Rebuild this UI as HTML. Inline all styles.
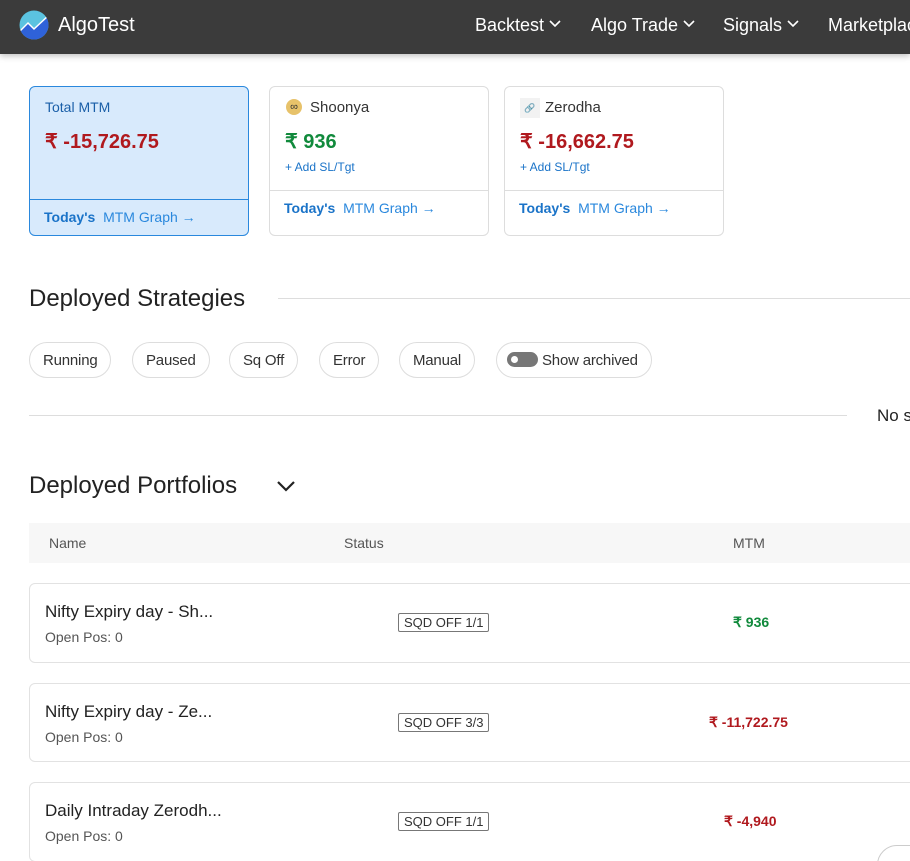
<!DOCTYPE html>
<html><head><meta charset="utf-8"><style>
*{box-sizing:border-box;margin:0;padding:0}
html,body{width:910px;height:861px;overflow:hidden}
body{background:#fff;font-family:"Liberation Sans",Arial,sans-serif;position:relative;color:#222}
.a{position:absolute;white-space:nowrap}
.hdr{left:0;top:0;width:910px;height:54px;background:#3b3b3b;box-shadow:0 2px 6px rgba(0,0,0,.25)}
.nav{color:#fff;font-size:18px;top:15px}
.nav svg{margin-left:4px;vertical-align:middle;position:relative;top:-2px}
.card{border:1px solid #ddd;border-radius:6px;background:#fff;width:220px;height:150px;top:86px}
.card .dv{position:absolute;left:0;right:0;top:103px;border-top:1px solid #ddd}
.card .nm{position:absolute;left:40px;top:12px;font-size:15px;color:#333}
.card .val{position:absolute;left:15px;top:42px;font-size:20px;font-weight:bold}
.card .sl{position:absolute;left:15px;top:73px;font-size:12px;color:#1a73c8}
.card .lk{position:absolute;left:14px;top:113px;font-size:14px;color:#2a88dd}
.card .lk b{color:#1a73c8}
.g{color:#118a3c}.r{color:#b0191e}
.pill{top:342px;height:36px;border:1px solid #ddd;border-radius:18px;font-size:15px;color:#333;line-height:36px;padding:0 13px;letter-spacing:-.2px}
.row{left:29px;width:900px;height:80px;border:1px solid #e2e2e2;border-radius:6px}
.row .t{position:absolute;left:15px;top:18px;font-size:17px;color:#222}
.row .o{position:absolute;left:15px;top:45px;font-size:14px;color:#555}
.row .s{position:absolute;left:368px;top:29px;border:1px solid #777;border-radius:2px;font-size:13px;color:#333;padding:1px 5px}
.row .m{position:absolute;top:30px;font-size:14px;font-weight:bold}
</style></head><body>
<div class="a hdr"></div>
<svg class="a" style="left:19px;top:10px" width="30" height="30" viewBox="0 0 30 30"><defs><clipPath id="c"><circle cx="15" cy="15" r="14.5"/></clipPath></defs><g clip-path="url(#c)"><rect width="30" height="30" fill="#5bc3e0"/><path d="M0 22 L9 13 L15 19 L30 5 L30 30 L0 30Z" fill="#2f62d9"/><path d="M0 22 L9 13 L15 19 L30 5" stroke="#fff" stroke-width="1.5" fill="none"/></g></svg>
<div class="a" style="left:58px;top:14px;font-size:20px;color:#fff">AlgoTest</div>
<div class="a nav" style="left:475px">Backtest<svg width="14" height="10" viewBox="0 0 14 10"><path d="M2 2 L7 7 L12 2" stroke="#fff" stroke-width="1.6" fill="none"/></svg></div>
<div class="a nav" style="left:591px">Algo Trade<svg width="14" height="10" viewBox="0 0 14 10"><path d="M2 2 L7 7 L12 2" stroke="#fff" stroke-width="1.6" fill="none"/></svg></div>
<div class="a nav" style="left:723px">Signals<svg width="14" height="10" viewBox="0 0 14 10"><path d="M2 2 L7 7 L12 2" stroke="#fff" stroke-width="1.6" fill="none"/></svg></div>
<div class="a nav" style="left:828px">Marketplace</div>

<div class="a card" style="left:29px;background:#d8eafc;border-color:#2a88dd"><div class="dv" style="top:112px;border-color:#2a88dd"></div>
<div class="nm" style="left:15px;color:#1a5fa8;font-size:14px">Total MTM</div><div class="val r" style="top:42px">₹ -15,726.75</div>
<div class="lk" style="top:122px"><b>Today's</b> &nbsp;MTM Graph &#8594;</div></div>
<div class="a card" style="left:269px"><div style="position:absolute;left:16px;top:12px;width:16px;height:16px;border-radius:50%;background:#e7c26a;font-size:11px;text-align:center;line-height:16px;color:#333">∞</div><div class="nm">Shoonya</div><div class="val g">₹ 936</div><div class="sl">+ Add SL/Tgt</div><div class="dv"></div><div class="lk"><b>Today's</b> &nbsp;MTM Graph &#8594;</div></div>
<div class="a card" style="left:504px"><div style="position:absolute;left:15px;top:11px;width:20px;height:20px;background:#f2f2f2;font-size:9px;text-align:center;line-height:20px;color:#999">🔗</div><div class="nm">Zerodha</div><div class="val r">₹ -16,662.75</div><div class="sl">+ Add SL/Tgt</div><div class="dv"></div><div class="lk"><b>Today's</b> &nbsp;MTM Graph &#8594;</div></div>

<div class="a" style="left:29px;top:285px;font-size:24px;color:#222">Deployed Strategies</div>
<div class="a" style="left:278px;top:298px;width:640px;border-top:1px solid #ddd"></div>
<div class="a pill" style="left:29px">Running</div>
<div class="a pill" style="left:132px">Paused</div>
<div class="a pill" style="left:229px">Sq Off</div>
<div class="a pill" style="left:319px">Error</div>
<div class="a pill" style="left:399px">Manual</div>
<div class="a pill" style="left:496px;padding-left:10px"><span style="display:inline-block;vertical-align:middle;width:31px;height:15px;border-radius:8px;background:#777;position:relative;margin-right:4px;top:-2px"><span style="position:absolute;left:4px;top:4px;width:7px;height:7px;border-radius:50%;background:#fff"></span></span>Show archived</div>
<div class="a" style="left:29px;top:415px;width:818px;border-top:1px solid #ddd"></div>
<div class="a" style="left:877px;top:406px;font-size:17px;color:#222">No s</div>

<div class="a" style="left:29px;top:472px;font-size:24px;color:#222">Deployed Portfolios</div>
<svg class="a" style="left:276px;top:479px" width="20" height="14" viewBox="0 0 20 14"><path d="M2 3 L10 11 L18 3" stroke="#222" stroke-width="2.2" fill="none"/></svg>
<div class="a" style="left:29px;top:523px;width:900px;height:40px;background:#f7f7f7"></div>
<div class="a" style="left:49px;top:535px;font-size:14px;color:#555">Name</div>
<div class="a" style="left:344px;top:535px;font-size:14px;color:#555">Status</div>
<div class="a" style="left:733px;top:535px;font-size:14px;color:#555">MTM</div>

<div class="a row" style="top:583px"><div class="t">Nifty Expiry day - Sh...</div><div class="o">Open Pos: 0</div><div class="s">SQD OFF 1/1</div><div class="m g" style="left:703px">₹ 936</div></div>
<div class="a row" style="top:683px;height:79px"><div class="t">Nifty Expiry day - Ze...</div><div class="o">Open Pos: 0</div><div class="s">SQD OFF 3/3</div><div class="m r" style="left:679px">₹ -11,722.75</div></div>
<div class="a row" style="top:782px"><div class="t">Daily Intraday Zerodh...</div><div class="o">Open Pos: 0</div><div class="s">SQD OFF 1/1</div><div class="m r" style="left:694px">₹ -4,940</div></div>
<div class="a" style="left:877px;top:845px;width:60px;height:40px;border:1px solid #ccc;border-radius:20px;background:#fff"></div>
</body></html>
